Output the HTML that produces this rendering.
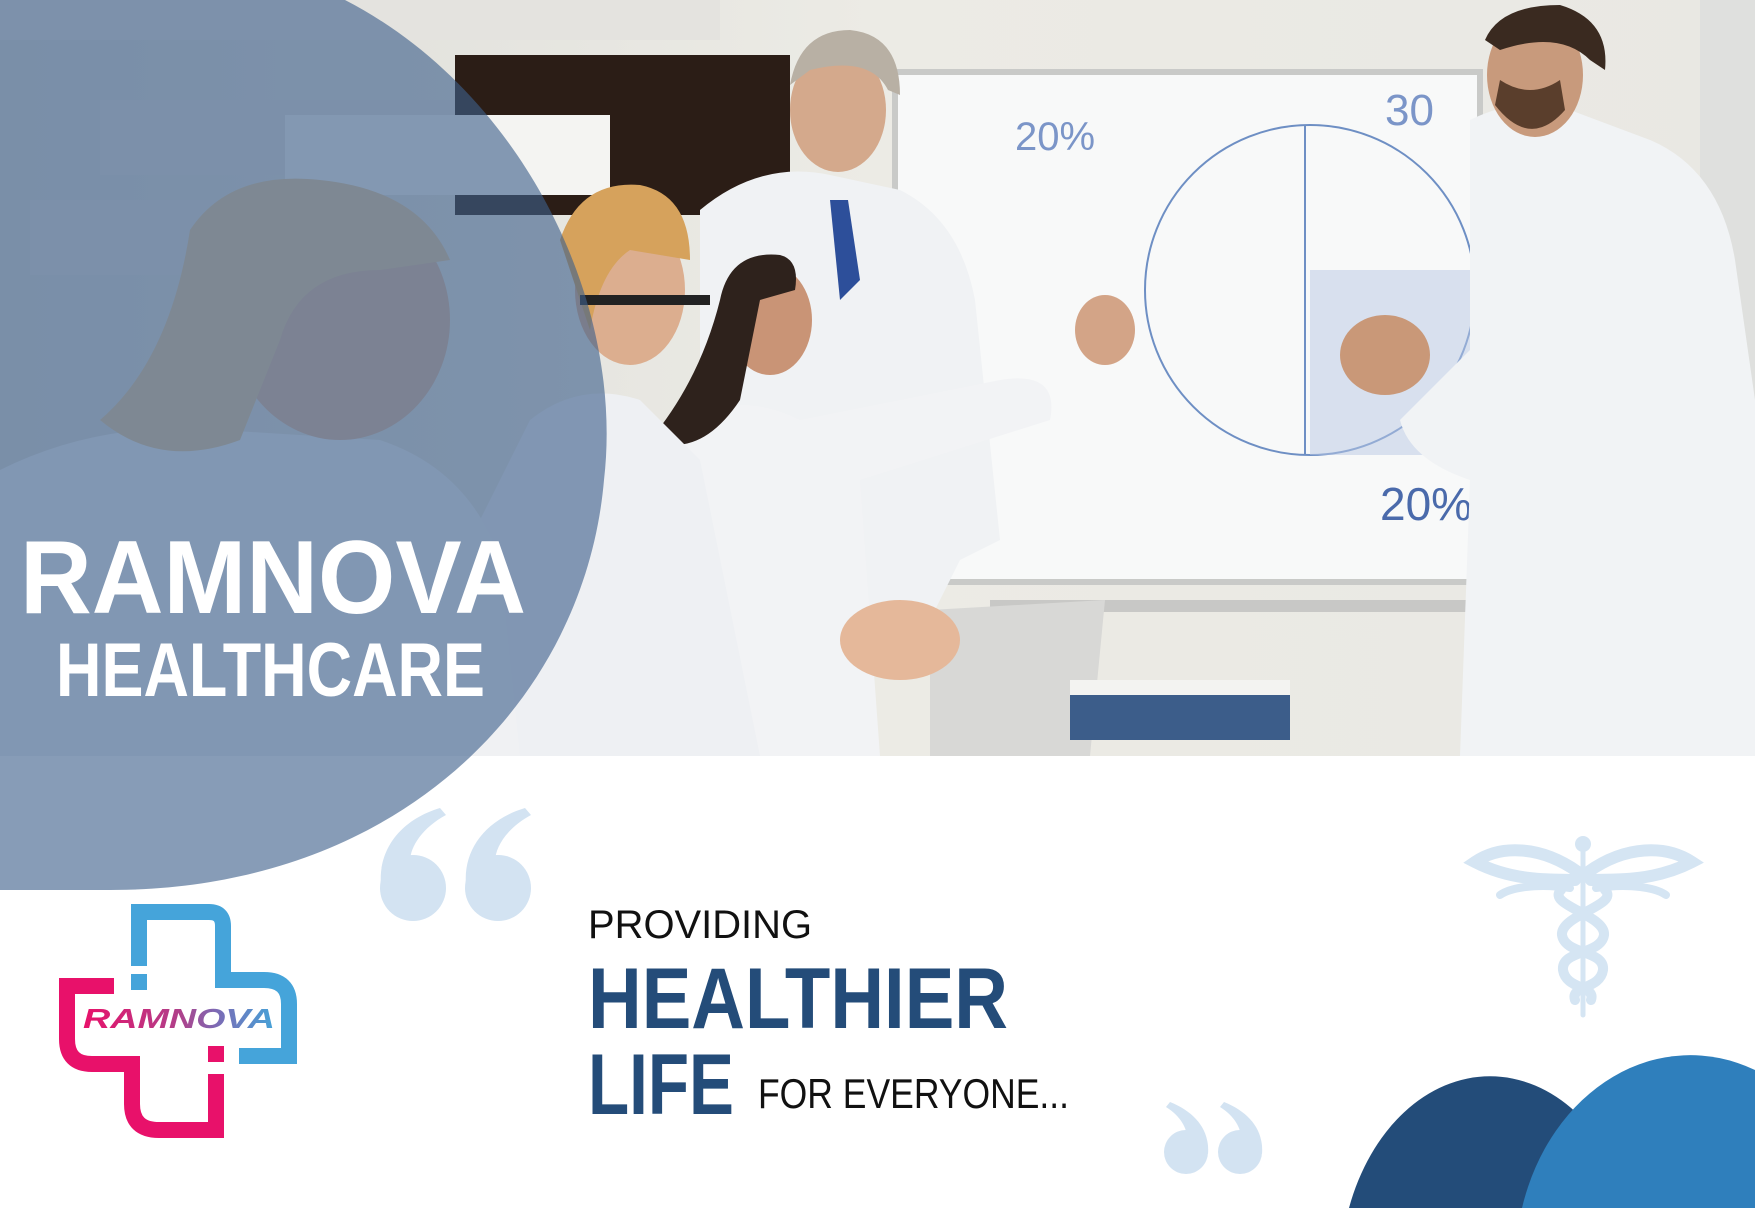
<!DOCTYPE html>
<html><head><meta charset="utf-8"><style>
html,body{margin:0;padding:0;background:#fff;width:1755px;height:1208px;overflow:hidden}
svg{display:block;overflow:hidden}
</style></head><body>
<svg width="1755" height="1208" viewBox="0 0 1755 1208" xmlns="http://www.w3.org/2000/svg">
<defs>
<linearGradient id="wall" x1="0" y1="0" x2="1" y2="0"><stop offset="0" stop-color="#dcdcd8"/><stop offset="0.5" stop-color="#ecebe5"/><stop offset="1" stop-color="#e9e8e3"/></linearGradient>
<linearGradient id="logoTxt" x1="0" y1="0" x2="1" y2="0"><stop offset="0" stop-color="#e8116a"/><stop offset="0.5" stop-color="#b0408a"/><stop offset="0.7" stop-color="#7b6bb5"/><stop offset="1" stop-color="#45a3d8"/></linearGradient>
<clipPath id="photo"><rect x="0" y="0" width="1755" height="756"/></clipPath>
</defs>
<g clip-path="url(#photo)">
<rect x="0" y="0" width="1755" height="756" fill="url(#wall)"/>
<rect x="0" y="0" width="720" height="40" fill="#e4e3df"/>
<rect x="100" y="100" width="360" height="75" fill="#e1e0dc"/>
<rect x="30" y="200" width="300" height="75" fill="#e1e0dc"/>
<rect x="455" y="55" width="335" height="160" fill="#2b1d16"/>
<rect x="285" y="115" width="325" height="80" fill="#f4f4f2"/>
<rect x="1700" y="0" width="55" height="756" fill="#dfe0de"/>
<rect x="895" y="72" width="585" height="510" fill="#f8f9f9" stroke="#c9cac8" stroke-width="6"/>
<circle cx="1310" cy="290" r="165" fill="none" stroke="#6e8fc4" stroke-width="2"/>
<line x1="1305" y1="125" x2="1305" y2="455" stroke="#6e8fc4" stroke-width="2"/>
<rect x="1310" y="270" width="160" height="185" fill="#b8c8e4" opacity="0.5"/>
<text x="1015" y="150" font-family="Liberation Sans" font-size="40" fill="#7b95c8">20%</text>
<text x="1385" y="125" font-family="Liberation Sans" font-size="44" fill="#7b95c8">30</text>
<text x="1380" y="520" font-family="Liberation Sans" font-size="46" fill="#4a6aab">20%</text>
<rect x="990" y="600" width="480" height="12" fill="#c8c8c6"/>
<path d="M1470 120 Q1520 95 1570 110 L1650 140 Q1720 170 1735 260 L1755 400 V756 H1460 L1470 480 Q1410 460 1400 420 L1470 350 Z" fill="#f1f3f5"/>
<ellipse cx="1535" cy="75" rx="48" ry="62" fill="#c89a7c"/>
<path d="M1485 40 Q1500 5 1560 5 Q1610 20 1605 70 L1590 60 Q1560 30 1500 50 Z" fill="#3a2a20"/>
<path d="M1495 105 Q1530 150 1565 110 L1560 80 Q1530 100 1500 80 Z" fill="#5a3e2c"/>
<ellipse cx="1385" cy="355" rx="45" ry="40" fill="#c99878"/>
<path d="M700 210 Q760 160 830 175 L900 190 Q960 220 975 300 L1000 540 L960 560 L930 620 H760 L700 500 Z" fill="#f0f2f4"/>
<ellipse cx="838" cy="110" rx="48" ry="62" fill="#d4a98c"/>
<path d="M790 85 Q800 30 850 30 Q900 35 900 95 L888 90 Q870 55 810 70 Z" fill="#b8b0a4"/>
<path d="M830 200 L848 200 L860 280 L840 300 Z" fill="#2d4f9a"/>
<path d="M690 420 Q740 390 800 420 L1000 380 Q1060 370 1050 420 L860 480 L880 756 H660 L660 520 Z" fill="#f2f3f5"/>
<ellipse cx="770" cy="320" rx="42" ry="55" fill="#c99476"/>
<path d="M720 300 Q730 250 780 255 Q800 260 795 290 L760 300 L740 400 Q700 460 650 440 Q700 380 720 300 Z" fill="#2e221c"/>
<ellipse cx="1105" cy="330" rx="30" ry="35" fill="#d3a487"/>
<path d="M530 420 Q580 380 640 400 L700 460 L760 756 H470 L480 520 Z" fill="#eef0f3"/>
<ellipse cx="630" cy="290" rx="55" ry="75" fill="#dcae8f"/>
<path d="M560 240 Q580 180 640 185 Q690 195 690 260 L630 250 Q600 270 590 330 Z" fill="#d6a25c"/>
<rect x="580" y="295" width="130" height="10" fill="#222"/>
<path d="M930 610 L1105 600 L1090 756 H930 Z" fill="#d8d8d6"/>
<rect x="1070" y="690" width="220" height="50" fill="#3c5d8a"/>
<rect x="1070" y="680" width="220" height="15" fill="#f3f3f1"/>
<ellipse cx="900" cy="640" rx="60" ry="40" fill="#e5b89a"/>
<path d="M0 470 Q100 420 220 430 L380 440 Q470 470 500 560 L520 756 H0 Z" fill="#f0f1f3"/>
<ellipse cx="340" cy="320" rx="110" ry="120" fill="#e2bca0"/>
<path d="M190 230 Q230 170 320 180 Q420 190 450 260 L380 270 Q300 270 280 340 L240 440 Q160 470 100 420 Q170 360 190 230 Z" fill="#e6cba0"/>
</g>

<path d="M0 0 H345 C 520 90 625 300 604 480 C 585 700 400 890 110 890 H0 Z" fill="rgb(62,95,138)" fill-opacity="0.62"/>

<text x="20" y="613" font-family="Liberation Sans, sans-serif" font-weight="700" font-size="104" fill="#fff" textLength="506" lengthAdjust="spacingAndGlyphs">RAMNOVA</text>
<text x="56" y="696" font-family="Liberation Sans, sans-serif" font-weight="700" font-size="76" fill="#fff" textLength="429" lengthAdjust="spacingAndGlyphs">HEALTHCARE</text>

<g fill="#d3e3f2">
<circle cx="413" cy="888" r="33"/>
<path d="M381 885 C 378 850 400 820 440 808 L446 815 C 418 830 405 855 412 870 Z"/>
<circle cx="498" cy="888" r="33"/>
<path d="M466 885 C 463 850 485 820 525 808 L531 815 C 503 830 490 855 497 870 Z"/>
</g>
<g fill="#d3e3f2">
<circle cx="1186" cy="1152" r="22"/>
<path d="M1208 1154 C 1210 1130 1195 1112 1170 1102 L1166 1107 C 1184 1118 1190 1135 1186 1145 Z"/>
<circle cx="1240" cy="1152" r="22"/>
<path d="M1262 1154 C 1264 1130 1249 1112 1224 1102 L1220 1107 C 1238 1118 1244 1135 1240 1145 Z"/>
</g>

<g fill="none" stroke="#d5e5f3" stroke-linecap="round">
<line x1="1583" y1="845" x2="1583" y2="1015" stroke-width="5"/>
<path d="M1578 872 C 1540 845 1500 845 1475 862 C 1510 880 1545 880 1575 880" stroke-width="12"/>
<path d="M1588 872 C 1626 845 1666 845 1692 862 C 1657 880 1622 880 1591 880" stroke-width="12"/>
<path d="M1570 888 C 1535 883 1510 888 1500 895" stroke-width="8"/>
<path d="M1596 888 C 1631 883 1656 888 1666 895" stroke-width="8"/>
<path d="M1605 890 C 1620 905 1560 915 1562 935 C 1565 955 1605 950 1603 970 C 1600 990 1570 985 1575 1000" stroke-width="10"/>
<path d="M1561 890 C 1546 905 1606 915 1604 935 C 1601 955 1561 950 1563 970 C 1566 990 1596 985 1591 1000" stroke-width="10"/>
</g>
<circle cx="1583" cy="844" r="8" fill="#d5e5f3"/>

<g transform="translate(59,904)">
<path d="M80 62 V8 H150 Q164 8 164 22 V76 H205 Q230 76 230 100 V152 H180" fill="none" stroke="#45a4da" stroke-width="16"/>
<rect x="72" y="70" width="16" height="16" fill="#45a4da"/>
<path d="M55 82 H8 V135 Q8 160 33 160 H73 V200 Q73 226 100 226 H157 V170" fill="none" stroke="#e8116a" stroke-width="16"/>
<rect x="149" y="142" width="16" height="16" fill="#e8116a"/>
<rect x="18" y="92" width="200" height="40" fill="#fff"/>
<text x="24" y="124" font-family="Liberation Sans, sans-serif" font-weight="700" font-style="italic" font-size="28" fill="url(#logoTxt)" textLength="192" lengthAdjust="spacingAndGlyphs">RAMNOVA</text>
</g>

<text x="588" y="938" font-family="Liberation Sans, sans-serif" font-size="40" fill="#111" textLength="224" lengthAdjust="spacingAndGlyphs">PROVIDING</text>
<text x="588" y="1028" font-family="Liberation Sans, sans-serif" font-weight="700" font-size="86" fill="#244c79" textLength="420" lengthAdjust="spacingAndGlyphs">HEALTHIER</text>
<text x="588" y="1114" font-family="Liberation Sans, sans-serif" font-weight="700" font-size="86" fill="#244c79" textLength="146" lengthAdjust="spacingAndGlyphs">LIFE</text>
<text x="758" y="1108" font-family="Liberation Sans, sans-serif" font-size="42" fill="#111" textLength="311" lengthAdjust="spacingAndGlyphs">FOR EVERYONE...</text>

<path d="M1349 1208 A150 200 0 0 1 1631 1208 Z" fill="#234c79"/>
<path d="M1522 1208 A175 210 0 0 1 1755 1070 V1208 Z" fill="#2f7fbc"/>
</svg>
</body></html>
